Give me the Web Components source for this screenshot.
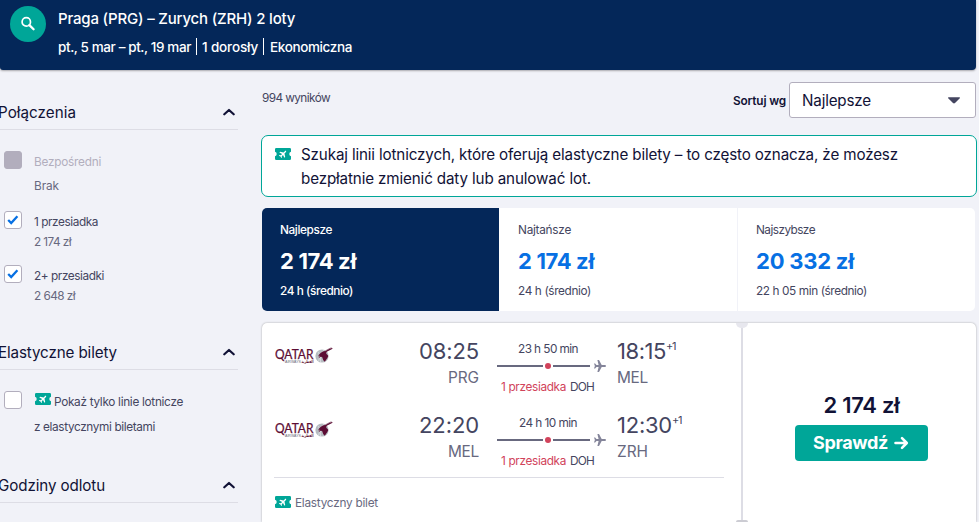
<!DOCTYPE html>
<html lang="pl">
<head>
<meta charset="utf-8">
<title>Praga – Zurych</title>
<style>
  body {
    margin: 0;
    height: 522px;
    overflow: hidden;
    background: #f1f2f8;
    color: #111236;
    font: 11.8px/20px Inter, "Liberation Sans", sans-serif;
  }
  .page {
    display: grid;
    grid-template-columns: 238px 716px;
    column-gap: 23px;
  }
</style>
</head>
<body>
<search-header></search-header>
<div class="page">
  <filter-panel></filter-panel>
  <flight-results></flight-results>
</div>

<script>
class BaseElement extends HTMLElement {
  constructor() {
    super();
    this.shadowDOM = this.attachShadow({ mode: "open" });
  }
  connectedCallback() {
    this.shadowDOM.innerHTML = this.render();
  }
}

// one line of text, tracked so that it fills the width given in "w"
class FitText extends HTMLElement {
  constructor() {
    super();
    this.attachShadow({ mode: "open" }).innerHTML =
      `<style>:host { display: inline-block; white-space: nowrap; }</style><slot></slot>`;
  }
  connectedCallback() {
    const width = Number(this.getAttribute("w"));
    const range = document.createRange();
    range.selectNodeContents(this);
    const natural = range.getBoundingClientRect().width;
    this.style.letterSpacing = `${(width - natural) / this.textContent.length}px`;
  }
}

class SearchHeader extends BaseElement {
  render() {
    return `
      <style>
        :host {
          display: flex;
          box-sizing: border-box;
          width: 976px;
          height: 70px;
          padding: 6px 10px 0;
          gap: 12px;
          background: #042759;
          color: #fff;
          border-radius: 0 0 4px 3px;
          box-shadow: 0 1px 2px rgba(37, 32, 31, .35);
        }
        .search {
          display: grid;
          place-items: center;
          width: 36px;
          height: 36px;
          border-radius: 50%;
          background: #00a698;
        }
        .title { font-size: 15px; line-height: 26px; font-weight: 500; display: block; }
        .details { display: flex; font-size: 13.5px; line-height: 19px; font-weight: 500; margin-top: 6px; }
        .details fit-text + fit-text {
          padding-left: 6px;
          background: linear-gradient(#fff, #fff) 0 0 / 1px 17px no-repeat;
        }
        .details fit-text:last-child { padding-left: 7px; }
      </style>
      <div class="search">
        <svg width="16" height="16" viewBox="0 0 16 16" fill="none" stroke="#fff">
          <circle cx="6.3" cy="5.9" r="4.2" stroke-width="1.7"/>
          <path d="M9.4 9.1l4.2 4.2" stroke-width="2.3" stroke-linecap="round"/>
        </svg>
      </div>
      <div>
        <fit-text class="title" w="237">Praga (PRG) – Zurych (ZRH) 2 loty</fit-text>
        <div class="details"><fit-text w="133" style="margin-right:5px">pt., 5 mar – pt., 19 mar</fit-text><fit-text w="56" style="margin-right:5px">1 dorosły</fit-text><fit-text w="82">Ekonomiczna</fit-text></div>
      </div>`;
  }
}

class TicketIcon extends BaseElement {
  render() {
    return `
      <style>
        :host { display: inline-block; width: 16px; height: 12px; }
        svg { display: block; }
      </style>
      <svg width="16" height="12" viewBox="0 0 16 12">
        <path fill="#00a698" d="M1.3 0h13.4A1.3 1.3 0 0 1 16 1.3v2.4a2.4 2.4 0 0 0 0 4.6v2.4a1.3 1.3 0 0 1-1.3 1.3H1.3A1.3 1.3 0 0 1 0 10.7V8.3a2.4 2.4 0 0 0 0-4.6V1.3A1.3 1.3 0 0 1 1.3 0z"/>
        <path fill="#fff" transform="translate(8 6) rotate(-45) scale(.72)" d="M6 0C6 .6 5.3.9 4.5.9H2L-.7 5h-1.5L-.9.9h-2.4L-4.5 2.4h-1.2L-4.9 0l-.8-2.4h1.2L-3.3-.9h2.4L-2.2-5h1.5L2-.9h2.5C5.3-.9 6-.6 6 0z"/>
      </svg>`;
  }
}

class FilterGroup extends BaseElement {
  render() {
    return `
      <style>
        :host { display: block; }
        header {
          display: flex;
          justify-content: space-between;
          height: 29px;
          padding-right: 3px;
          margin-left: -2px;
          border-bottom: 1px solid #dddde5;
          font-size: 15.2px;
          line-height: 26px;
        }
        svg { margin-top: 8px; }
      </style>
      <header>
        <fit-text w="${this.getAttribute("w")}">${this.getAttribute("heading")}</fit-text>
        <svg width="12" height="8" viewBox="0 0 12 8" fill="none" stroke="#111236" stroke-width="2.2" stroke-linecap="round" stroke-linejoin="round"><path d="M1.3 6.3L6 2l4.7 4.3"/></svg>
      </header>
      <slot></slot>`;
  }
}

class FilterOption extends BaseElement {
  render() {
    const tick = this.hasAttribute("checked")
      ? `<svg width="18" height="18" viewBox="0 0 18 18" fill="none" stroke="#0770e3" stroke-width="2.3"><path d="M4.2 9l3 3 6.2-6.7"/></svg>`
      : "";
    return `
      <style>
        :host { display: flex; gap: 12px; padding-left: 4px; color: #444560; }
        :host([disabled]) { color: #b2aebd; }
        .box {
          box-sizing: border-box;
          width: 18px;
          height: 18px;
          border: 1px solid #b2aebd;
          border-radius: 3px;
          background: #fff;
        }
        :host([disabled]) .box { background: #b2aebd; }
        svg { display: block; margin: -1px; }
        .text { padding-top: 1px; }
        ::slotted(*) { display: block; }
        ::slotted([slot="note"]) { color: #68697f; }
      </style>
      <div class="box">${tick}</div>
      <div class="text"><slot></slot><slot name="note"></slot></div>`;
  }
}

class FilterPanel extends BaseElement {
  render() {
    return `
      <style>
        :host { display: block; height: 422px; padding-top: 30px; }
        filter-group { height: 240px; }
        filter-group.flex { height: 133px; }
        filter-group.last { height: 40px; }
        filter-option { height: 54px; }
        filter-option.first { margin-top: 21px; height: 60px; }
        .lines { line-height: 25px; margin-top: -2px; }
        ticket-icon { vertical-align: 1px; margin: 0 3px 0 1px; }
      </style>
      <filter-group heading="Połączenia" w="78">
        <filter-option class="first" disabled>
          <fit-text w="67">Bezpośredni</fit-text>
          <fit-text slot="note" w="25" style="margin-top:4px">Brak</fit-text>
        </filter-option>
        <filter-option checked>
          <fit-text w="64">1 przesiadka</fit-text>
          <fit-text slot="note" w="37">2 174 zł</fit-text>
        </filter-option>
        <filter-option checked>
          <fit-text w="70">2+ przesiadki</fit-text>
          <fit-text slot="note" w="41">2 648 zł</fit-text>
        </filter-option>
      </filter-group>
      <filter-group class="flex" heading="Elastyczne bilety" w="119">
        <filter-option class="first">
          <div class="lines"><ticket-icon></ticket-icon><fit-text w="129">Pokaż tylko linie lotnicze</fit-text><br><fit-text w="121">z elastycznymi biletami</fit-text></div>
        </filter-option>
      </filter-group>
      <filter-group class="last" heading="Godziny odlotu" w="107"></filter-group>`;
  }
}

class SortTab extends BaseElement {
  render() {
    const [w1, w2, w3] = this.getAttribute("widths").split(" ");
    return `
      <style>
        :host { display: block; padding: 12px 18px 0; color: #444560; background: #fff; }
        :host([selected]) { background: #042759; color: #fff; font-weight: 500; }
        fit-text { display: block; width: max-content; }
        .price { font-size: 22px; line-height: 28px; font-weight: 650; color: #0770e3; margin: 7px 0 6px; }
        :host([selected]) .price { color: #fff; }
      </style>
      <fit-text w="${w1}">${this.getAttribute("name")}</fit-text>
      <fit-text class="price" w="${w2}">${this.getAttribute("price")}</fit-text>
      <fit-text w="${w3}">${this.getAttribute("time")} (średnio)</fit-text>`;
  }
}

class QatarLogo extends BaseElement {
  render() {
    return `
      <style>
        :host { display: block; width: 60px; height: 20px; }
        svg { display: block; }
      </style>
      <svg width="60" height="20" viewBox="0 0 60 20" fill="#5c0d34">
        <text x="0" y="13" font-family="Lato, sans-serif" font-size="13" stroke="#5c0d34" stroke-width=".25" textLength="38.5" lengthAdjust="spacingAndGlyphs">QATAR</text>
        <text x="10" y="17" font-family="Liberation Sans, sans-serif" font-size="3.6" fill="#666879" textLength="16" lengthAdjust="spacingAndGlyphs">AIRWAYS</text>
        <text x="26.5" y="16.6" font-family="DejaVu Sans, sans-serif" font-size="4.4" font-weight="700" textLength="12" lengthAdjust="spacingAndGlyphs">القطرية</text>
        <circle cx="47" cy="10" r="6.6" fill="#b6bcc1"/>
        <path d="M42.5 5.5c2 1.5 2.5 4 1.2 9.5M49 4c-3 2-4 7-3.5 12" fill="none" stroke="#dfe2e4" stroke-width=".8"/>
        <path d="M43 10.5c1.6-3.2 3.8-4.9 7-5.4l4.5-2.5c1.2-.4 2.3-.7 3.1-.6l-.5 1-5.3 2.7c-.9 1-.8 2.4.9 3.3.8.7.4 2-.5 3.2l-2.4 3.6-1.5-1.5-1.2-3.4-1.5-.1-2 1.5c.3-1.2.8-2 1.6-2.700z"/>
        <path d="M50.5 4.7l6-3.2" stroke="#9c7688" fill="none" stroke-width=".7"/>
      </svg>`;
  }
}

class FlightLeg extends BaseElement {
  render() {
    const a = (name) => this.getAttribute(name);
    return `
      <style>
        :host {
          display: grid;
          grid-template-columns: 145px 60px 128px 1fr;
          height: 74px;
          color: #444560;
        }
        .time { font-size: 22px; line-height: 28px; }
        .code { font-size: 15.4px; line-height: 26px; color: #68697f; }
        .from { display: flex; flex-direction: column; align-items: flex-end; padding-right: 1px; }
        .to { display: flex; flex-direction: column; align-items: flex-start; padding-left: 9px; }
        .sup { font-size: 11px; line-height: 18px; }
        .arrive { display: flex; }
        qatar-logo { margin-top: 9px; }
        .route { margin-left: 17px; width: 110px; }
        .duration { width: 102px; line-height: 16px; padding-top: 4px; }
        .duration fit-text { display: block; margin: 0 auto; width: max-content; }
        .line { display: flex; align-items: center; height: 12px; margin: 3px 0 7px; }
        .line > * { flex: none; }
        .line i { height: 2px; background: #68697f; width: 46px; }
        .line b + i { width: 37px; }
        .line b { width: 6px; height: 6px; border-radius: 50%; background: #d1435b; margin: 0 2px; }
        .line svg { margin-left: 4px; }
        .stops { display: flex; gap: 4px; line-height: 16px; padding-left: 4px; }
        .red { color: #d1435b; }
      </style>
      <qatar-logo></qatar-logo>
      <div class="from"><fit-text class="time" w="60">${a("depart")}</fit-text><fit-text class="code" w="31">${a("from")}</fit-text></div>
      <div class="route">
        <div class="duration"><fit-text w="${a("duration-w")}">${a("duration")}</fit-text></div>
        <div class="line"><i></i><b></b><i></i>
          <svg width="12" height="12" viewBox="-6 -6 12 12" fill="#84859a"><path d="M6 0C6 .7 5.3 1 4.5 1H1.7L-1 6h-1.6L-1.400 1h-2.100L-4.900 2.500H-6L-5.100 0-6-2.500h1.100L-3.500-1h2.100L-2.600-6H-1L1.700-1h2.800C5.300-1 6-.7 6 0z"/></svg>
        </div>
        <div class="stops"><fit-text class="red" w="65">1 przesiadka</fit-text><fit-text w="24">DOH</fit-text></div>
      </div>
      <div class="to">
        <div class="arrive"><fit-text class="time" w="${a("arrive-w")}">${a("arrive")}</fit-text><fit-text class="sup" w="9">+1</fit-text></div>
        <fit-text class="code" w="31">${a("to")}</fit-text>
      </div>`;
  }
}

class FlightCard extends BaseElement {
  render() {
    return `
      <style>
        :host {
          display: grid;
          grid-template-columns: 479px 2px 233px;
          width: 714px;
          height: 199px;
          margin: 12px 0 0 1px;
          background: #fff;
          border-radius: 5px 5px 0 0;
          box-shadow: 0 0 2px rgba(37, 32, 31, .4);
        }
        .legs { padding: 14px 17px 0 13px; }
        .flex {
          display: flex;
          gap: 4px;
          margin: -8px 0 0 -1px;
          padding: 15px 0 0 1px;
          border-top: 1px solid #dddde5;
          color: #68697f;
        }
        .flex ticket-icon { margin-top: 3px; }
        .split { position: relative; background: #dddde5; }
        .split::before, .split::after {
          content: "";
          position: absolute;
          left: -5px;
          top: 0;
          width: 12px;
          height: 5px;
          border-radius: 0 0 6px 6px;
          background: #e7e7ee;
        }
        .split::after { top: 197px; height: 2px; border-radius: 5px 5px 0 0; background: #ccccd3; }
        .buy { display: flex; flex-direction: column; align-items: center; padding: 68px 0 0 4px; }
        .price { font-size: 22px; line-height: 28px; font-weight: 600; }
        button {
          display: flex;
          align-items: center;
          gap: 6px;
          width: 133px;
          height: 36px;
          margin: 6px 0 0;
          padding: 0 18px;
          border: 0;
          border-radius: 4px;
          background: #00a698;
          color: #fff;
          font: 700 18px/24px Inter, sans-serif;
        }
        button svg { flex: none; }
      </style>
      <div class="legs">
        <flight-leg depart="08:25" from="PRG" duration="23 h 50 min" duration-w="60" arrive="18:15" arrive-w="49" to="MEL"></flight-leg>
        <flight-leg depart="22:20" from="MEL" duration="24 h 10 min" duration-w="58" arrive="12:30" arrive-w="55" to="ZRH"></flight-leg>
        <div class="flex"><ticket-icon></ticket-icon><fit-text w="83">Elastyczny bilet</fit-text></div>
      </div>
      <div class="split"></div>
      <div class="buy">
        <fit-text class="price" w="76">2 174 zł</fit-text>
        <button><fit-text w="75">Sprawdź</fit-text>
          <svg width="15" height="14" viewBox="0 0 15 14" fill="none" stroke="#fff" stroke-width="2.6" stroke-linecap="round" stroke-linejoin="round"><path d="M1.5 7h11M8 2.2L12.8 7 8 11.8"/></svg>
        </button>
      </div>`;
  }
}

class FlightResults extends BaseElement {
  render() {
    return `
      <style>
        :host { display: block; height: 452px; }
        .top { display: flex; align-items: flex-start; padding: 12px 1px 0; height: 53px; }
        .count { margin: 6px auto 0 0; color: #444560; }
        .sort { font-weight: 600; margin: 9px 3px 0 0; }
        .select {
          display: flex;
          align-items: center;
          justify-content: space-between;
          box-sizing: border-box;
          width: 187px;
          height: 36px;
          padding: 0 15px 0 12px;
          border: 1px solid #b2aebd;
          border-radius: 3px;
          background: #fff;
          font-size: 15.2px;
        }
        .select fit-text { padding-top: 2px; }
        .banner {
          display: flex;
          gap: 10px;
          box-sizing: border-box;
          height: 62px;
          padding: 7px 13px;
          border: 1px solid #00a698;
          border-radius: 7px;
          background: #fff;
          font-size: 15.2px;
          line-height: 24px;
        }
        .banner fit-text { display: block; }
        .banner ticket-icon { margin-top: 5px; }
        .tabs {
          display: grid;
          grid-template-columns: 237px 238px 238px;
          width: 713px;
          height: 103px;
          margin: 11px 0 0 1px;
          border-radius: 5px;
          overflow: hidden;
        }
        .tabs sort-tab:nth-child(2) { padding-left: 19px; }
        .tabs sort-tab:nth-child(3) { border-left: 1px solid #f1f2f8; }
      </style>
      <div class="top">
        <fit-text class="count" w="68">994 wyników</fit-text>
        <fit-text class="sort" w="53">Sortuj wg</fit-text>
        <div class="select"><fit-text w="69">Najlepsze</fit-text><svg width="12" height="7" viewBox="0 0 12 7" fill="#444560"><path d="M.6.3h10.8c.6 0 .8.6.4 1L7 6.1c-.6.6-1.4.6-2 0L.2 1.3c-.4-.4-.2-1 .4-1z"/></svg></div>
      </div>
      <div class="banner">
        <ticket-icon></ticket-icon>
        <div><fit-text w="597">Szukaj linii lotniczych, które oferują elastyczne bilety – to często oznacza, że możesz</fit-text><fit-text w="290">bezpłatnie zmienić daty lub anulować lot.</fit-text></div>
      </div>
      <div class="tabs">
        <sort-tab selected name="Najlepsze" price="2 174 zł" time="24 h" widths="52 76 73"></sort-tab>
        <sort-tab name="Najtańsze" price="2 174 zł" time="24 h" widths="53 76 73"></sort-tab>
        <sort-tab name="Najszybsze" price="20 332 zł" time="22 h 05 min" widths="59 98 111"></sort-tab>
      </div>
      <flight-card></flight-card>`;
  }
}

customElements.define("search-header", SearchHeader);
customElements.define("ticket-icon", TicketIcon);
customElements.define("filter-panel", FilterPanel);
customElements.define("filter-group", FilterGroup);
customElements.define("filter-option", FilterOption);
customElements.define("flight-results", FlightResults);
customElements.define("sort-tab", SortTab);
customElements.define("flight-card", FlightCard);
customElements.define("flight-leg", FlightLeg);
customElements.define("qatar-logo", QatarLogo);
customElements.define("fit-text", FitText);
</script>
</body>
</html>
